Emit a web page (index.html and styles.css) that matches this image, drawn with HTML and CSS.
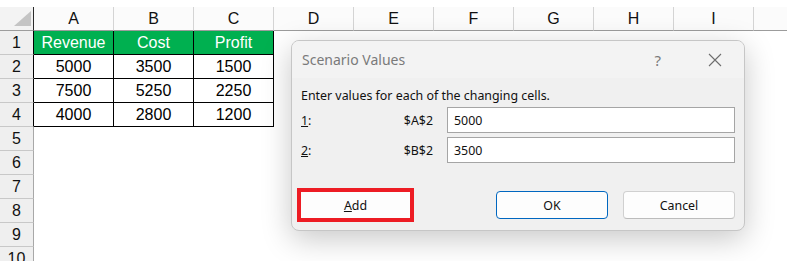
FILE: index.html
```html
<!DOCTYPE html>
<html lang="en">
<head>
    <meta charset="UTF-8">
    <title>Scenario Values</title>
    <link rel="stylesheet" href="styles.css">
</head>
<body>
    <div class="sheet">
        <div class="corner"><svg width="17" height="15" viewBox="0 0 17 15"><polygon points="17,0 17,15 0,15" fill="#c4c4c4"/></svg></div>
        <div class="col">A</div><div class="col">B</div><div class="col">C</div><div class="col">D</div><div class="col">E</div>
        <div class="col">F</div><div class="col">G</div><div class="col">H</div><div class="col">I</div><div class="col last"></div>

        <div class="row tbl">1</div>
        <div class="cell head">Revenue</div><div class="cell head">Cost</div><div class="cell head">Profit</div>
        <div class="blank"></div>

        <div class="row tbl">2</div>
        <div class="cell">5000</div><div class="cell">3500</div><div class="cell">1500</div>
        <div class="blank"></div>

        <div class="row tbl">3</div>
        <div class="cell">7500</div><div class="cell">5250</div><div class="cell">2250</div>
        <div class="blank"></div>

        <div class="row tbl">4</div>
        <div class="cell">4000</div><div class="cell">2800</div><div class="cell">1200</div>
        <div class="blank"></div>

        <div class="row">5</div><div class="blank full"></div>
        <div class="row">6</div><div class="blank full"></div>
        <div class="row">7</div><div class="blank full"></div>
        <div class="row">8</div><div class="blank full"></div>
        <div class="row">9</div><div class="blank full"></div>
        <div class="row">10</div><div class="blank full"></div>
    </div>

    <div class="dialog">
        <div class="title-bar">
            <span class="title">Scenario Values</span>
            <span class="help">?</span>
            <svg class="close" width="14" height="14" viewBox="0 0 14 14"><path d="M1 1 L13 13 M13 1 L1 13" stroke="#6e6e6e" stroke-width="1.1" fill="none"/></svg>
        </div>
        <div class="dialog-body">
            <p class="intro">Enter values for each of the changing cells.</p>
            <div class="field">
                <div class="label"><span><u>1</u>:</span><span>$A$2</span></div>
                <input type="text" value="5000">
            </div>
            <div class="field">
                <div class="label"><span><u>2</u>:</span><span>$B$2</span></div>
                <input type="text" value="3500">
            </div>
            <div class="buttons">
                <button class="btn add"><u>A</u>dd</button>
                <div class="right">
                    <button class="btn ok">OK</button>
                    <button class="btn">Cancel</button>
                </div>
            </div>
        </div>
    </div>
</body>
</html>
```

FILE: styles.css
```css
body {
    margin: 0;
    background: #fff;
    font-family: "Liberation Sans", Arial, sans-serif;
    overflow: hidden;
}
.sheet {
    padding-top: 7px;
    display: grid;
    grid-template-columns: 34px repeat(9, 80px) 1fr;
    grid-template-rows: 24px;
    grid-auto-rows: 24px;
    font-size: 16px;
}
.corner {
    display: flex;
    align-items: flex-end;
    justify-content: flex-end;
    padding: 0 2px 4px 0;
    border-right: 1px solid #2b2b2b;
    border-bottom: 1px solid #9c9c9c;
    background: #f3f3f3;
    box-sizing: border-box;
}
.col {
    box-sizing: border-box;
    border-right: 1px solid #d4d4d4;
    border-bottom: 1px solid #9c9c9c;
    background: #fbfbfb;
    display: flex;
    align-items: center;
    justify-content: center;
    color: #111;
}
.col.last {
    border-right: none;
}
.row {
    box-sizing: border-box;
    background: #efefef;
    border-right: 1px solid #a8a8a8;
    border-bottom: 1px solid #c8c8c8;
    display: flex;
    align-items: center;
    justify-content: center;
    color: #111;
}
.row.tbl {
    border-right-color: #000;
}
.cell {
    box-sizing: border-box;
    border-right: 1px solid #000;
    border-bottom: 1px solid #000;
    display: flex;
    align-items: center;
    justify-content: center;
    color: #000;
}
.cell.head {
    background: #00b050;
    color: #fff;
}
.blank {
    grid-column: span 7;
}
.blank.full {
    grid-column: span 10;
}

.dialog {
    position: absolute;
    left: 291px;
    top: 40px;
    width: 454px;
    height: 191px;
    box-sizing: border-box;
    border: 1px solid #c6c6c6;
    border-radius: 8px;
    background: #f0f0f0;
    box-shadow: 0 8px 30px rgba(0, 0, 0, 0.22);
    font-family: "Noto Sans", sans-serif;
    font-size: 12.4px;
    color: #111;
    overflow: hidden;
}
.title-bar {
    height: 37px;
    background: #f3f3f3;
    display: flex;
    align-items: center;
    padding: 0 22px 0 10px;
}
.title {
    flex: 1;
    font-size: 14px;
    color: #7a7a7a;
}
.help {
    font-size: 15px;
    color: #7a7a7a;
    margin-right: 47px;
}
.dialog-body {
    padding: 9px 9px 10px 9px;
}
.intro {
    margin: 0 0 3px;
    line-height: 17px;
}
.field {
    display: flex;
    align-items: center;
    margin-bottom: 4px;
}
.label {
    width: 132px;
    margin-right: 14px;
    display: flex;
    justify-content: space-between;
}
.field input {
    flex: 1;
    height: 26px;
    box-sizing: border-box;
    border: 1px solid #a5a5a5;
    background: #fff;
    padding: 0 6px;
    font-family: "Noto Sans", sans-serif;
    font-size: 12.4px;
    color: #111;
}
.buttons {
    margin-top: 28px;
    display: flex;
    justify-content: space-between;
}
.right {
    display: flex;
    gap: 15px;
}
.btn {
    width: 112px;
    height: 28px;
    box-sizing: border-box;
    border: 1px solid #d0d0d0;
    border-bottom-color: #bcbcbc;
    border-radius: 4px;
    background: #fdfdfd;
    font-family: "Noto Sans", sans-serif;
    font-size: 12.4px;
    color: #111;
    padding: 0;
}
.btn.ok {
    border: 1px solid #0067c0;
}
.btn.add {
    width: 111px;
    margin-left: -1px;
    border-radius: 0;
    outline: 4px solid #ed1c24;
    outline-offset: -1px;
}
```
